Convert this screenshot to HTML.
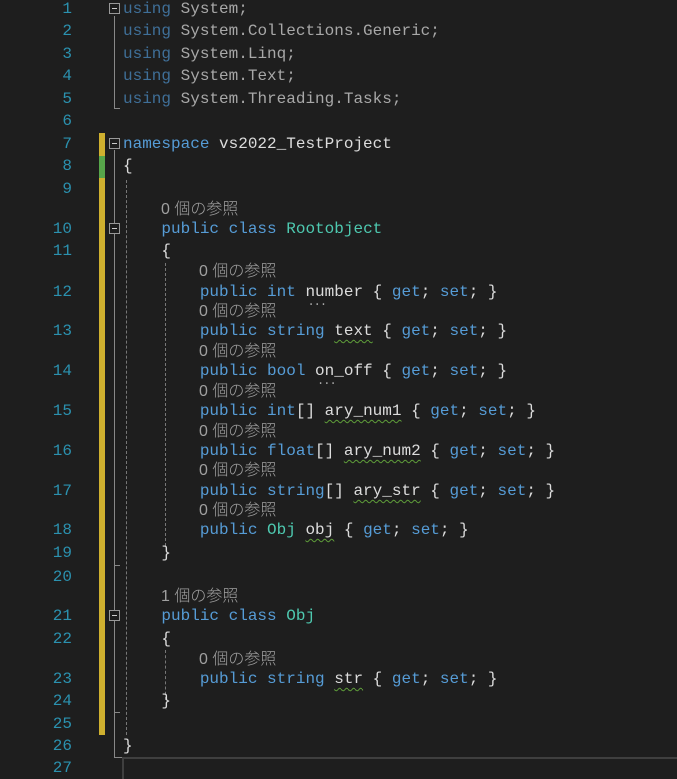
<!DOCTYPE html>
<html><head><meta charset="utf-8">
<style>
body{margin:0;background:#1e1e1e;width:677px;height:769px;overflow:hidden;position:relative;font-family:"Liberation Mono",monospace;font-size:16px;color:#dcdcdc}
.n{position:absolute;left:0;width:72px;text-align:right;color:#2b91af;height:22px;line-height:22px}
.l{position:absolute;left:123px;height:22px;line-height:22px;white-space:pre}
.c{position:absolute;height:20px;line-height:20px;white-space:pre;color:#a0a0a0;font-family:"Liberation Sans","Noto Sans CJK JP",sans-serif;font-size:16px;font-weight:300}
.k{color:#569cd6}.t{color:#4ec9b0}
.dk{color:#3f6f98}.dt{color:#a8a8a8}
.w{text-decoration:underline wavy #5f9e3a;text-underline-offset:4px;text-decoration-thickness:1px}
.d{position:relative}
.d:after{content:"...";position:absolute;left:2px;top:8px;font-size:12px;color:#aaa;letter-spacing:-1px}
.box{position:absolute;left:109px;width:9px;height:9px;border:1px solid #999;background:#1e1e1e}
.box:after{content:"";position:absolute;left:2px;top:4px;width:5px;height:1px;background:#ccc}
.v{position:absolute;width:1px;background:#888}
.h{position:absolute;height:1px;background:#888}
.dash{position:absolute;width:0;border-left:1px dashed #777}
</style></head><body>
<div style="position:absolute;left:99px;top:133px;width:6px;height:602px;background:#cfb02f"></div>
<div style="position:absolute;left:99px;top:156px;width:6px;height:22px;background:#57a64a"></div>

<div class="v" style="left:114px;top:16px;height:92px"></div><div class="h" style="left:114px;top:108px;width:6px"></div>
<div class="v" style="left:114px;top:150px;height:607px"></div><div class="h" style="left:114px;top:757px;width:8px"></div>
<div class="h" style="left:114px;top:565px;width:6px"></div>
<div class="h" style="left:114px;top:712px;width:6px"></div>
<div class="box" style="top:3px"></div>
<div class="box" style="top:138px"></div>
<div class="box" style="top:223px"></div>
<div class="box" style="top:610px"></div>
<div class="dash" style="left:126px;top:180px;height:555px"></div>
<div class="dash" style="left:165px;top:263px;height:283px"></div>
<div class="dash" style="left:165px;top:650px;height:50px"></div>

<div style="position:absolute;left:122px;top:757px;width:560px;height:20px;border-top:2px solid #3f3f3f;border-left:2px solid #3f3f3f"></div>

<div class="n" style="top:-2px">1</div><div class="l" style="top:-2px"><span class="dk">using</span> <span class="dt">System;</span></div>
<div class="n" style="top:20px">2</div><div class="l" style="top:20px"><span class="dk">using</span> <span class="dt">System.Collections.Generic;</span></div>
<div class="n" style="top:43px">3</div><div class="l" style="top:43px"><span class="dk">using</span> <span class="dt">System.Linq;</span></div>
<div class="n" style="top:65px">4</div><div class="l" style="top:65px"><span class="dk">using</span> <span class="dt">System.Text;</span></div>
<div class="n" style="top:88px">5</div><div class="l" style="top:88px"><span class="dk">using</span> <span class="dt">System.Threading.Tasks;</span></div>
<div class="n" style="top:110px">6</div>
<div class="n" style="top:133px">7</div><div class="l" style="top:133px"><span class="k">namespace</span> vs2022_TestProject</div>
<div class="n" style="top:155px">8</div><div class="l" style="top:155px">{</div>
<div class="n" style="top:178px">9</div>
<div class="c" style="left:161px;top:200px">0 個の参照</div>
<div class="n" style="top:218px">10</div><div class="l" style="top:218px">    <span class="k">public</span> <span class="k">class</span> <span class="t">Rootobject</span></div>
<div class="n" style="top:240px">11</div><div class="l" style="top:240px">    {</div>
<div class="c" style="left:199px;top:262px">0 個の参照</div>
<div class="n" style="top:281px">12</div><div class="l" style="top:281px">        <span class="k">public</span> <span class="k">int</span> <span class="d">number</span> { <span class="k">get</span>; <span class="k">set</span>; }</div>
<div class="c" style="left:199px;top:302px">0 個の参照</div>
<div class="n" style="top:320px">13</div><div class="l" style="top:320px">        <span class="k">public</span> <span class="k">string</span> <span class="w">text</span> { <span class="k">get</span>; <span class="k">set</span>; }</div>
<div class="c" style="left:199px;top:342px">0 個の参照</div>
<div class="n" style="top:360px">14</div><div class="l" style="top:360px">        <span class="k">public</span> <span class="k">bool</span> <span class="d">on_off</span> { <span class="k">get</span>; <span class="k">set</span>; }</div>
<div class="c" style="left:199px;top:382px">0 個の参照</div>
<div class="n" style="top:400px">15</div><div class="l" style="top:400px">        <span class="k">public</span> <span class="k">int</span>[] <span class="w">ary_num1</span> { <span class="k">get</span>; <span class="k">set</span>; }</div>
<div class="c" style="left:199px;top:422px">0 個の参照</div>
<div class="n" style="top:440px">16</div><div class="l" style="top:440px">        <span class="k">public</span> <span class="k">float</span>[] <span class="w">ary_num2</span> { <span class="k">get</span>; <span class="k">set</span>; }</div>
<div class="c" style="left:199px;top:461px">0 個の参照</div>
<div class="n" style="top:480px">17</div><div class="l" style="top:480px">        <span class="k">public</span> <span class="k">string</span>[] <span class="w">ary_str</span> { <span class="k">get</span>; <span class="k">set</span>; }</div>
<div class="c" style="left:199px;top:501px">0 個の参照</div>
<div class="n" style="top:519px">18</div><div class="l" style="top:519px">        <span class="k">public</span> <span class="t">Obj</span> <span class="w">obj</span> { <span class="k">get</span>; <span class="k">set</span>; }</div>
<div class="n" style="top:542px">19</div><div class="l" style="top:542px">    }</div>
<div class="n" style="top:566px">20</div>
<div class="c" style="left:161px;top:587px">1 個の参照</div>
<div class="n" style="top:605px">21</div><div class="l" style="top:605px">    <span class="k">public</span> <span class="k">class</span> <span class="t">Obj</span></div>
<div class="n" style="top:628px">22</div><div class="l" style="top:628px">    {</div>
<div class="c" style="left:199px;top:650px">0 個の参照</div>
<div class="n" style="top:668px">23</div><div class="l" style="top:668px">        <span class="k">public</span> <span class="k">string</span> <span class="w">str</span> { <span class="k">get</span>; <span class="k">set</span>; }</div>
<div class="n" style="top:690px">24</div><div class="l" style="top:690px">    }</div>
<div class="n" style="top:713px">25</div>
<div class="n" style="top:735px">26</div><div class="l" style="top:735px">}</div>
<div class="n" style="top:757px">27</div>
</body></html>
